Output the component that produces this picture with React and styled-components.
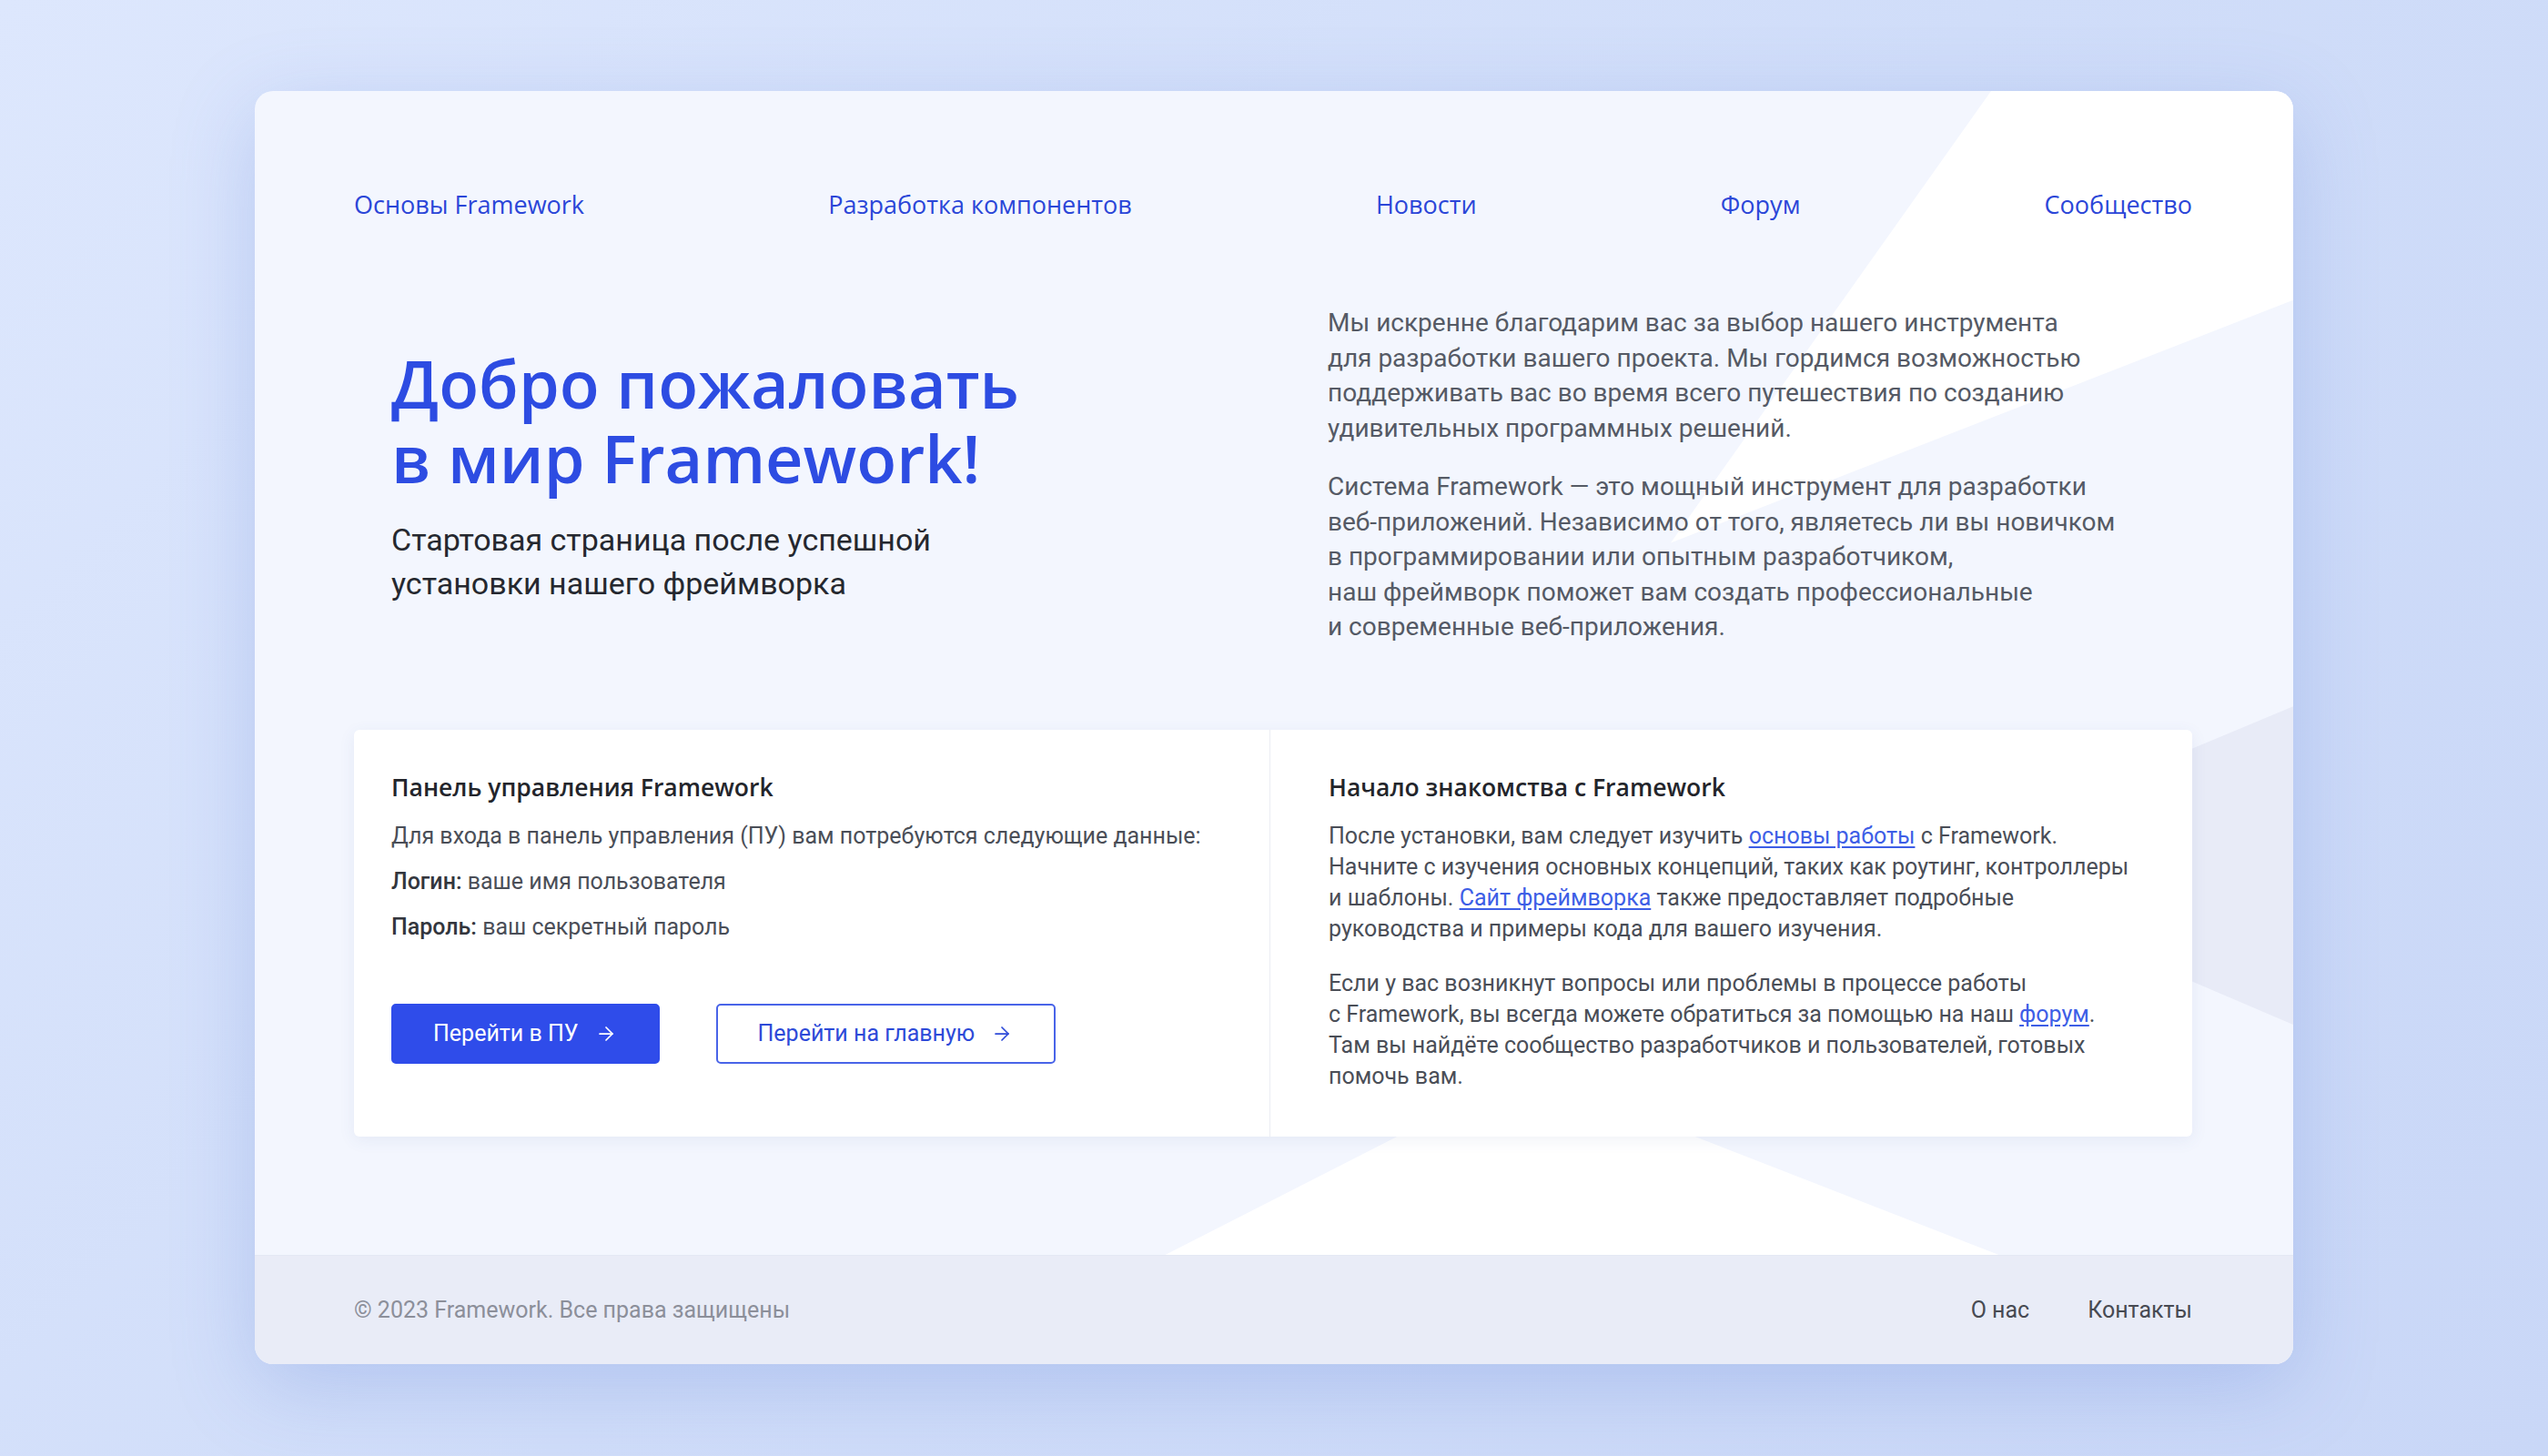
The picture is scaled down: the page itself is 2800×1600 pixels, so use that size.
import React from 'react';
import styled, { createGlobalStyle } from 'styled-components';
import { ArrowRight } from 'lucide-react';

const GlobalStyle = createGlobalStyle`
  html, body {
    margin: 0;
    padding: 0;
  }
  body {
    background: linear-gradient(135deg, #dde7fd 0%, #d0ddf9 50%, #c9d7f7 100%);
    font-family: Roboto, "Liberation Sans", sans-serif;
  }
  * {
    box-sizing: border-box;
  }
`;

const Page = styled.div`
  min-height: 100vh;
  display: flex;
  justify-content: center;
  align-items: flex-start;
  padding: 100px 280px;
`;

const Card = styled.div`
  position: relative;
  width: 2240px;
  background: #f3f6fe;
  border-radius: 20px;
  overflow: hidden;
  box-shadow: 0 24px 90px rgba(96, 128, 214, 0.28);
`;

const Decor = styled.svg`
  position: absolute;
  inset: 0;
  width: 100%;
  height: 100%;
  pointer-events: none;
`;

const Main = styled.div`
  position: relative;
  padding: 106px 111px 130px 109px;
`;

const Nav = styled.nav`
  display: flex;
  justify-content: space-between;
  align-items: center;
`;

const NavLink = styled.a`
  font-family: "Open Sans", "Noto Sans", sans-serif;
  font-size: 27px;
  line-height: 38px;
  color: #2b46d8;
  text-decoration: none;
`;

const Hero = styled.section`
  margin-top: 92px;
  display: grid;
  grid-template-columns: 1006px 1fr;
  align-items: center;
`;

const HeroLeft = styled.div`
  padding-left: 41px;
`;

const HeroRight = styled.div`
  padding-left: 64px;
`;

const Title = styled.h1`
  margin: 0;
  font-family: "Open Sans", "Noto Sans", sans-serif;
  font-weight: 600;
  font-size: 72px;
  line-height: 82px;
  color: #2d4ce2;
`;

const Subtitle = styled.p`
  margin: 25px 0 0;
  font-size: 34px;
  line-height: 48px;
  color: #25282f;
`;

const Lead = styled.p`
  margin: 0 0 26px;
  font-size: 28px;
  line-height: 38.5px;
  color: #555a65;
  white-space: nowrap;

  &:last-child {
    margin-bottom: 0;
  }
`;

const Panels = styled.section`
  margin-top: 93px;
  display: grid;
  grid-template-columns: 1006px 1fr;
  background: #ffffff;
  border-radius: 6px;
  box-shadow: 0 4px 18px rgba(70, 90, 150, 0.08);
`;

const Panel = styled.div`
  padding: ${(p) => (p.$wide ? '45px 64px 49px' : '45px 41px 49px')};
  border-left: ${(p) => (p.$wide ? '1px solid #ebedf3' : 'none')};
`;

const PanelTitle = styled.h3`
  margin: 0 0 19px;
  font-family: "Open Sans", "Noto Sans", sans-serif;
  font-weight: 600;
  font-size: 26.5px;
  line-height: 36px;
  color: #23252b;
`;

const Info = styled.p`
  margin: 0 0 16px;
  font-size: 25px;
  line-height: 34px;
  color: #4a4e57;

  b {
    font-weight: 500;
    color: #33363d;
  }
`;

const Text = styled.p`
  margin: 0 0 26px;
  font-size: 25px;
  line-height: 34px;
  color: #4a4e57;
  white-space: nowrap;

  &:last-child {
    margin-bottom: 0;
  }

  a {
    color: #3d5ee6;
    text-decoration: underline;
    text-underline-offset: 3px;
  }
`;

const Buttons = styled.div`
  margin-top: 67px;
  display: flex;
  gap: 62px;
`;

const Button = styled.a`
  height: 66px;
  display: inline-flex;
  align-items: center;
  gap: 18px;
  padding: 0 45px 0 44px;
  font-size: 25px;
  border-radius: 5px;
  text-decoration: none;
  border: 2px solid ${(p) => (p.$primary ? '#2f4cea' : '#4964e8')};
  background: ${(p) => (p.$primary ? '#2f4cea' : '#ffffff')};
  color: ${(p) => (p.$primary ? '#ffffff' : '#2d4ad8')};
`;

const Footer = styled.footer`
  position: relative;
  height: 120px;
  display: flex;
  align-items: center;
  justify-content: space-between;
  padding: 0 111px 0 109px;
  background: #e9ecf7;
  border-top: 1px solid #e4e8f4;
  font-size: 25px;
`;

const Copy = styled.span`
  color: #8c8f9a;
`;

const FooterLinks = styled.div`
  display: flex;
  gap: 64px;
`;

const FooterLink = styled.a`
  color: #474a52;
  text-decoration: none;
`;

const navItems = ['Основы Framework', 'Разработка компонентов', 'Новости', 'Форум', 'Сообщество'];

const App = () => {
  return (
    <>
      <GlobalStyle />
      <Page>
        <Card>
          <Decor viewBox="0 0 2240 1400" preserveAspectRatio="none">
            <polygon points="1908,0 2240,0 2240,230 1556,497" fill="#ffffff" />
            <polygon points="2240,677 2240,1027 1826,850" fill="#e8ebf7" />
            <polygon points="997,1282 1921,1282 1397,1078" fill="#ffffff" />
          </Decor>
          <Main>
            <Nav>
              {navItems.map((item) => (
                <NavLink key={item} href="#">{item}</NavLink>
              ))}
            </Nav>

            <Hero>
              <HeroLeft>
                <Title>
                  Добро пожаловать
                  <br />
                  в мир Framework!
                </Title>
                <Subtitle>
                  Стартовая страница после успешной
                  <br />
                  установки нашего фреймворка
                </Subtitle>
              </HeroLeft>
              <HeroRight>
                <Lead>
                  Мы искренне благодарим вас за выбор нашего инструмента
                  <br />
                  для разработки вашего проекта. Мы гордимся возможностью
                  <br />
                  поддерживать вас во время всего путешествия по созданию
                  <br />
                  удивительных программных решений.
                </Lead>
                <Lead>
                  Система Framework — это мощный инструмент для разработки
                  <br />
                  веб-приложений. Независимо от того, являетесь ли вы новичком
                  <br />
                  в программировании или опытным разработчиком,
                  <br />
                  наш фреймворк поможет вам создать профессиональные
                  <br />
                  и современные веб-приложения.
                </Lead>
              </HeroRight>
            </Hero>

            <Panels>
              <Panel>
                <PanelTitle>Панель управления Framework</PanelTitle>
                <Info>Для входа в панель управления (ПУ) вам потребуются следующие данные:</Info>
                <Info>
                  <b>Логин:</b> ваше имя пользователя
                </Info>
                <Info>
                  <b>Пароль:</b> ваш секретный пароль
                </Info>
                <Buttons>
                  <Button href="#" $primary>
                    Перейти в ПУ
                    <ArrowRight size={24} strokeWidth={1.75} />
                  </Button>
                  <Button href="#">
                    Перейти на главную
                    <ArrowRight size={24} strokeWidth={1.75} />
                  </Button>
                </Buttons>
              </Panel>
              <Panel $wide>
                <PanelTitle>Начало знакомства с Framework</PanelTitle>
                <Text>
                  После установки, вам следует изучить <a href="#">основы работы</a> с Framework.
                  <br />
                  Начните с изучения основных концепций, таких как роутинг, контроллеры
                  <br />
                  и шаблоны. <a href="#">Сайт фреймворка</a> также предоставляет подробные
                  <br />
                  руководства и примеры кода для вашего изучения.
                </Text>
                <Text>
                  Если у вас возникнут вопросы или проблемы в процессе работы
                  <br />
                  с Framework, вы всегда можете обратиться за помощью на наш <a href="#">форум</a>.
                  <br />
                  Там вы найдёте сообщество разработчиков и пользователей, готовых
                  <br />
                  помочь вам.
                </Text>
              </Panel>
            </Panels>
          </Main>

          <Footer>
            <Copy>© 2023 Framework. Все права защищены</Copy>
            <FooterLinks>
              <FooterLink href="#">О нас</FooterLink>
              <FooterLink href="#">Контакты</FooterLink>
            </FooterLinks>
          </Footer>
        </Card>
      </Page>
    </>
  );
};

export default App;
